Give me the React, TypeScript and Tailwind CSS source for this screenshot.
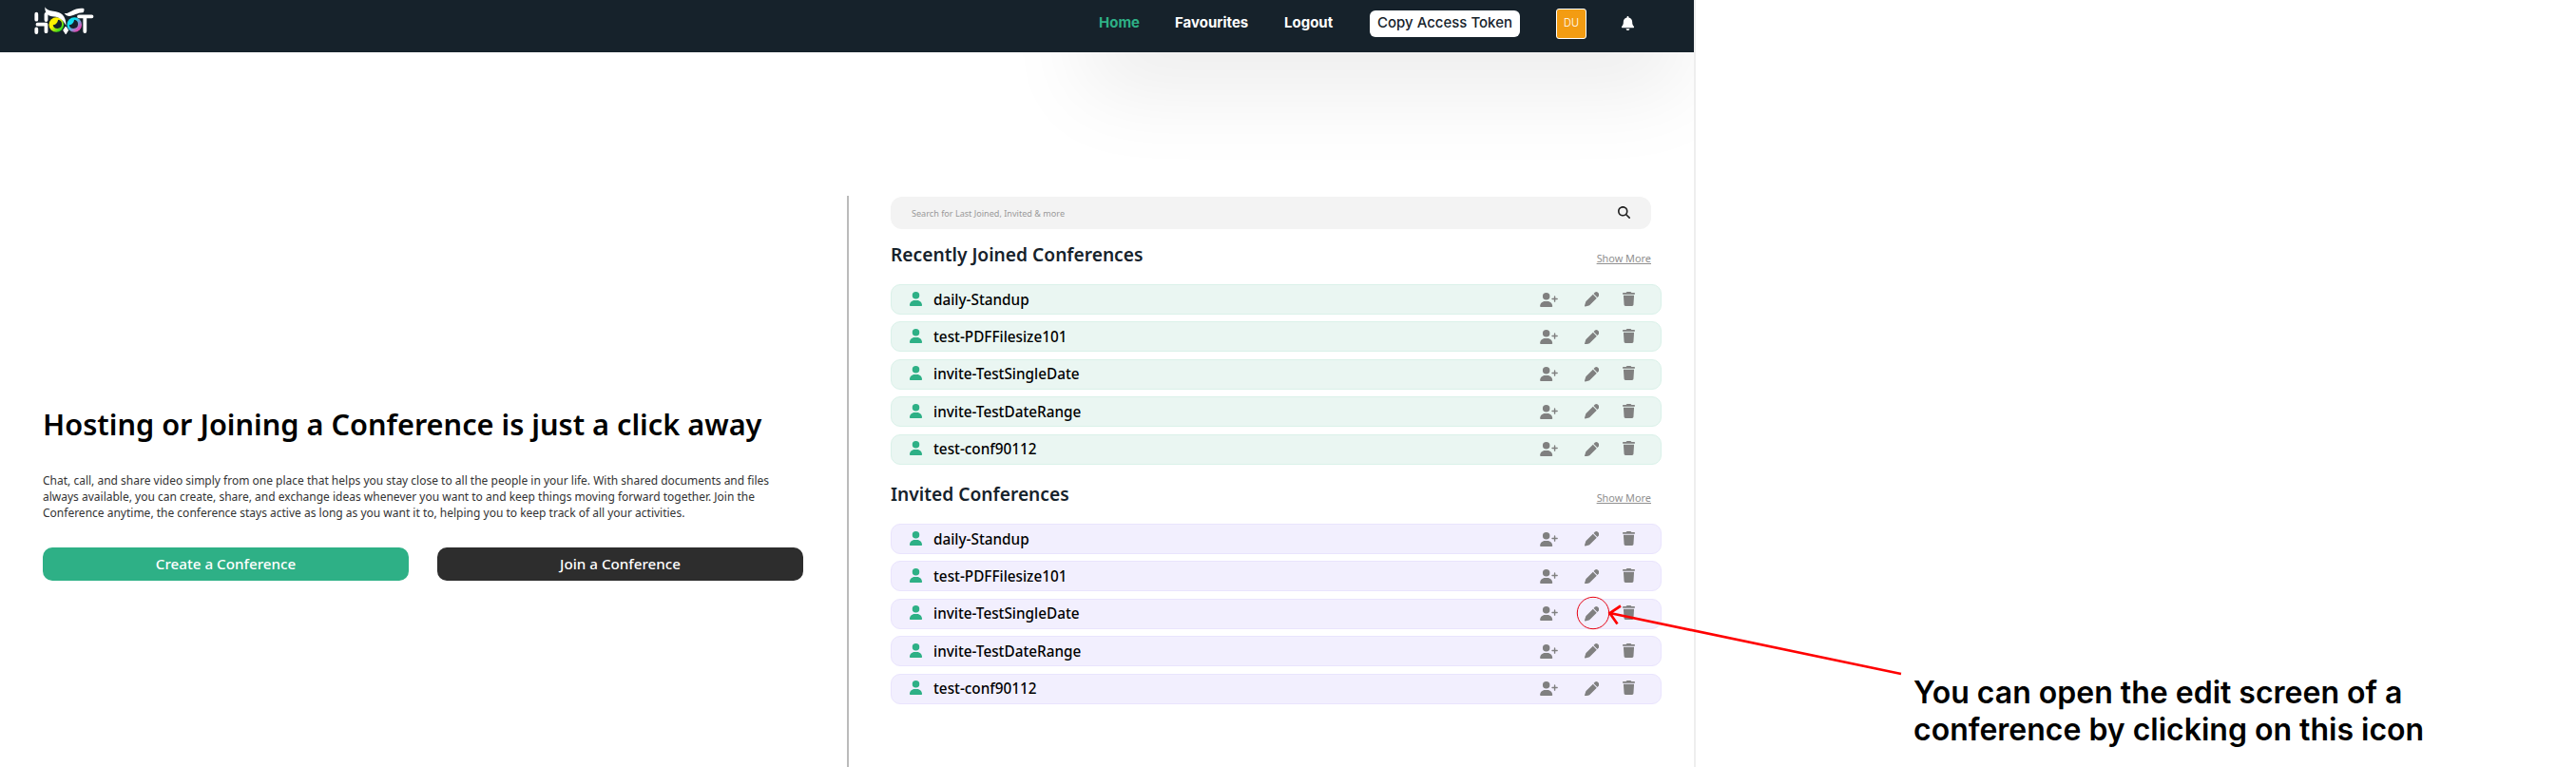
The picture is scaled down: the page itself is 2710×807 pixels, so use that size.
import React from "react";
import { FaUser, FaUserPlus, FaPen, FaTrash, FaMagnifyingGlass, FaBell } from "react-icons/fa6";

const conferences = [
  "daily-Standup",
  "test-PDFFilesize101",
  "invite-TestSingleDate",
  "invite-TestDateRange",
  "test-conf90112",
];

function Logo() {
  return (
    <svg className="h-[30px] w-[66px]" viewBox="0 0 66 30" fill="none">
      <defs>
        <linearGradient id="eyeL" x1="0" y1="0" x2="1" y2="1">
          <stop offset="0.4" stopColor="#fff200" />
          <stop offset="0.85" stopColor="#22d61c" />
        </linearGradient>
        <linearGradient id="eyeR" x1="0" y1="0" x2="1" y2="1">
          <stop offset="0.35" stopColor="#12dff2" />
          <stop offset="0.8" stopColor="#e64bb4" />
        </linearGradient>
      </defs>
      <g stroke="#fff" strokeWidth="3.8" strokeLinecap="round">
        <path d="M3.3 7.700v6M3.3 23.500v3.500M4.500 18.700H13M13.500 8v6M13.500 18.700v7.500" />
        <path d="M48 10.300h13.500M54.300 11v15" />
      </g>
      <circle cx="24.300" cy="19" r="7.800" fill="url(#eyeL)" />
      <circle cx="43.300" cy="19" r="7.800" fill="url(#eyeR)" />
      <path d="M26 13.700a4.700 4.700 0 1 1-5.300 5.300c2 .8 5.300-2 5.300-5.300zM43 13.700a4.700 4.700 0 1 1-5.300 5.300c2 .8 5.300-2 5.300-5.300z" fill="#16222b" />
      <path d="M12.300.3c2 3.400 5 4 8.700 4.500 8 1 13.500 4 13.500 15.200-3-6-7-9-12.500-9.500C15.500 10.300 12 7 12.300.3z" fill="#fff" />
      <path d="M32.700 7c3 .5 5-1 7.500-2.300C44 2.500 49 1 53.300 2c.5 2 0 3.500-1 4.200-5-.5-10 3.500-14.300 3.800-2 0-4-1-5.300-3z" fill="#fff" />
      <path d="M34.200 21l2.500 3.800-2.500 4-2.500-4z" fill="#fff" stroke="#fff" strokeLinejoin="round" />
    </svg>
  );
}

function Row({ name, tone }: { name: string; tone: string }) {
  return (
    <div className={`flex h-8 w-[811px] items-center rounded-[10px] border pr-[27px] pl-[18px] ${tone}`}>
      <FaUser className="mb-0.5 size-[15px] text-[#2eb086]" />
      <span className="ml-[11px] flex-1 text-[15.300px] font-medium text-black">{name}</span>
      <FaUserPlus className="h-[15px] w-[19px] text-[#808080]" />
      <FaPen className="ml-7 size-[15.500px] text-[#808080]" />
      <FaTrash className="mb-0.5 ml-[25px] h-[15px] w-[13px] text-[#808080]" />
    </div>
  );
}

function Section({ title, tone }: { title: string; tone: string }) {
  return (
    <section className="h-[252px]">
      <div className="flex h-[58px] w-[800px] items-center justify-between">
        <h2 className="mb-1 text-[19.200px] font-semibold text-[#16222b]">{title}</h2>
        <a className="mt-1 text-[10.900px] text-[#909090] underline">Show More</a>
      </div>
      <div className="flex flex-col gap-[7.400px]">
        {conferences.map((c) => (
          <Row key={c} name={c} tone={tone} />
        ))}
      </div>
    </section>
  );
}

export default function App() {
  return (
    <div className="relative flex h-[807px] w-[2710px] overflow-hidden bg-white font-['Noto_Sans',sans-serif]">
      <div className="flex w-[1784px] shrink-0 flex-col border-r-2 border-[#eeeeee]">
        <header className="z-10 flex h-[55px] shrink-0 items-start bg-[#16222b] font-['Inter',sans-serif] text-[15px] font-bold text-white">
          <div className="mt-[7px] ml-[35px]"><Logo /></div>
          <nav className="ml-[1055px] flex h-[49px] items-center">
            <a className="w-[80px] text-[#2eb086]">Home</a>
            <a className="w-[115px]">Favourites</a>
            <a className="w-[90px]">Logout</a>
            <button className="h-7 w-[158px] rounded-[6px] bg-white font-medium text-[#16222b]">Copy Access Token</button>
            <span className="ml-[38px] flex h-8 w-8 items-center justify-center rounded-[3px] border border-white bg-[#f39c12] text-[11px] font-light">DU</span>
            <FaBell className="ml-9 size-[15px]" />
          </nav>
        </header>
        <div className="relative flex h-[752px] overflow-hidden">
          <div className="absolute -top-[160px] left-[1143px] h-[100px] w-[627px] shadow-[0_100px_90px_rgba(0,0,0,0.08)]" />
          <main className="mt-[151px] flex h-[601px]">
            <div className="w-[891px] pt-[218px] pl-[45px]">
              <h1 className="text-[30.700px] leading-[44px] font-semibold whitespace-nowrap text-black">Hosting or Joining a Conference is just a click away</h1>
              <p className="mt-[30px] w-[790px] text-[12px] leading-[16.800px] text-[#333]">
                Chat, call, and share video simply from one place that helps you stay close to all the people in your life. With shared documents and files<br />
                always available, you can create, share, and exchange ideas whenever you want to and keep things moving forward together. Join the<br />
                Conference anytime, the conference stays active as long as you want it to, helping you to keep track of all your activities.
              </p>
              <div className="mt-[28px] flex gap-[30px] text-[15.200px] font-medium text-white">
                <button className="h-[35px] w-[385px] rounded-[10px] bg-[#2eb086]">Create a Conference</button>
                <button className="h-[35px] w-[385px] rounded-[10px] bg-[#2d2d2d]">Join a Conference</button>
              </div>
            </div>
            <div className="w-[2px] bg-[#bbbbbb]" />
            <div className="pt-px pl-[44px]">
              <div className="flex h-[34px] w-[800px] items-center justify-between rounded-[12px] bg-[#f3f3f3] px-[22px]">
                <span className="mt-px text-[9.100px] text-[#999]">Search for Last Joined, Invited &amp; more</span>
                <FaMagnifyingGlass className="mb-0.5 size-[13px] text-[#222]" />
              </div>
              <Section title="Recently Joined Conferences" tone="bg-[#eaf6f2] border-[#daf1e9]" />
              <Section title="Invited Conferences" tone="bg-[#f2effe] border-[#e9e4fd]" />
            </div>
          </main>
        </div>
      </div>
      <p className="mt-[709px] ml-[229px] font-['Inter',sans-serif] text-[32px] leading-[39px] font-semibold whitespace-nowrap text-black">
        You can open the edit screen of a<br />conference by clicking on this icon
      </p>
      <svg className="absolute top-[620px] left-[1650px] h-[100px] w-[360px]" viewBox="0 0 360 100" fill="none" stroke="#ff0000">
        <circle cx="26" cy="25" r="16.700" strokeWidth="1" stroke="#e60012" />
        <path d="M43.500 25L350 89M55 17.500L43.500 25l8 11.500" strokeWidth="2.700" />
      </svg>
    </div>
  );
}
